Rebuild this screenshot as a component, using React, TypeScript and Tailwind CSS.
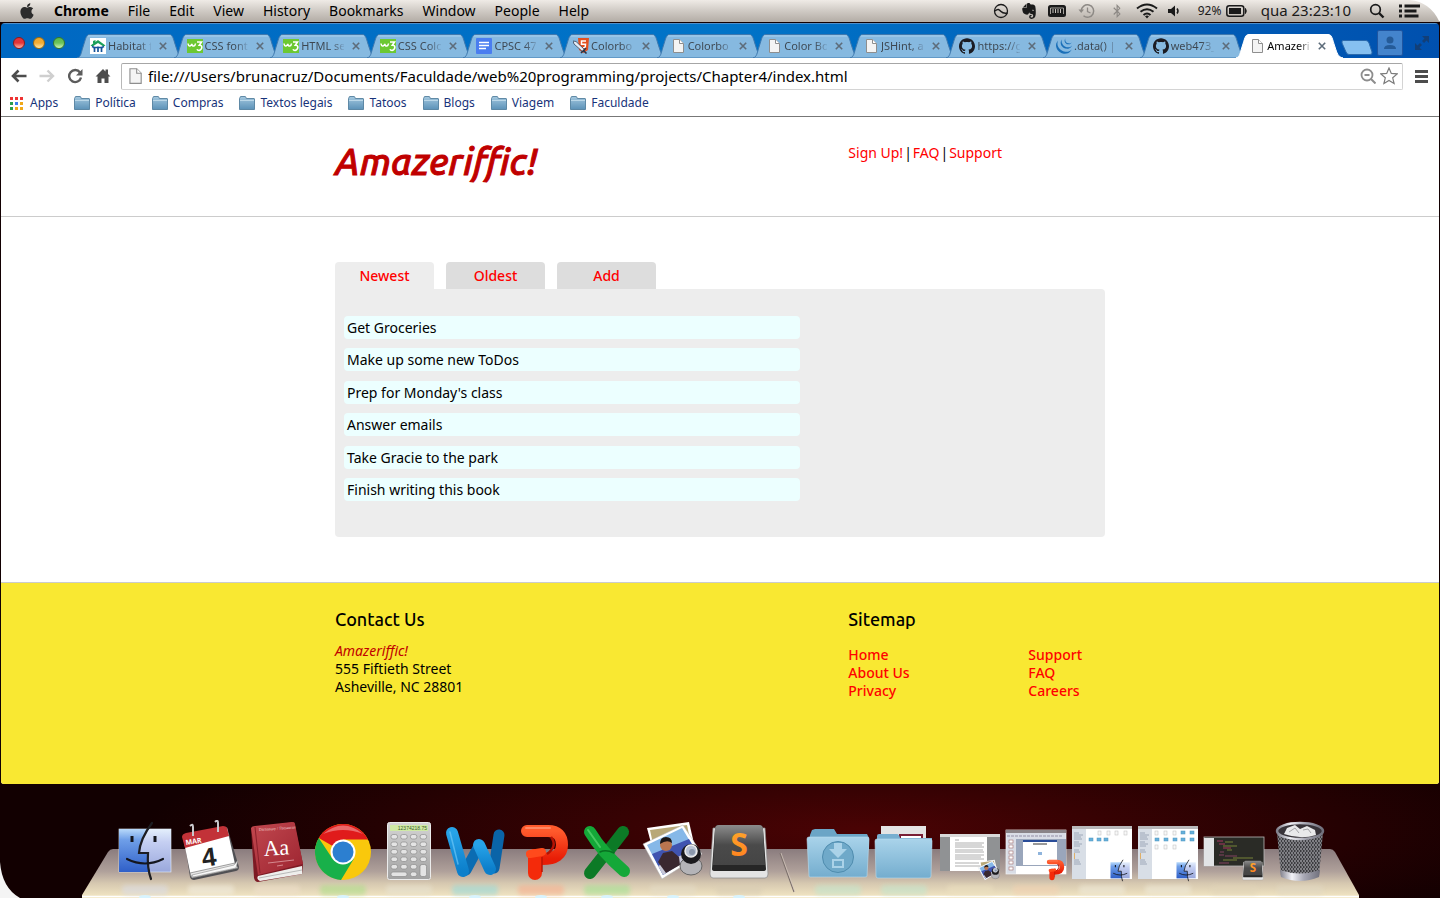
import React, { useState } from "react";
import {
  SiGithub,
  SiEvernote,
  SiJquery,
} from "react-icons/si";
import { FaApple, FaBluetoothB } from "react-icons/fa";

type IconName =
  | "habitat"
  | "w3"
  | "docs"
  | "sword"
  | "page"
  | "github"
  | "jquery";

const browserTabs: { title: string; icon: IconName; active?: boolean }[] = [
  { title: "Habitat f", icon: "habitat" },
  { title: "CSS font", icon: "w3" },
  { title: "HTML se", icon: "w3" },
  { title: "CSS Colo", icon: "w3" },
  { title: "CPSC 47", icon: "docs" },
  { title: "Colorbo", icon: "sword" },
  { title: "Colorbo", icon: "page" },
  { title: "Color Bo", icon: "page" },
  { title: "JSHint, a", icon: "page" },
  { title: "https://g", icon: "github" },
  { title: ".data() |", icon: "jquery" },
  { title: "web473_", icon: "github" },
  { title: "Amazeri", icon: "page", active: true },
];

const menus = ["File", "Edit", "View", "History", "Bookmarks", "Window", "People", "Help"];
const bookmarks = ["Política", "Compras", "Textos legais", "Tatoos", "Blogs", "Viagem", "Faculdade"];

const todos = [
  "Get Groceries",
  "Make up some new ToDos",
  "Prep for Monday's class",
  "Answer emails",
  "Take Gracie to the park",
  "Finish writing this book",
];

function SharedDefs() {
  return (
    <svg className="absolute h-0 w-0" aria-hidden="true">
      <defs>
        <linearGradient id="finderL" x1="0" y1="0" x2="0" y2="1">
          <stop offset="0" stopColor="#b9dafa" />
          <stop offset="0.25" stopColor="#6f9fe8" />
          <stop offset="1" stopColor="#2f5fc8" />
        </linearGradient>
        <linearGradient id="finderR" x1="0" y1="0" x2="0" y2="1">
          <stop offset="0" stopColor="#e4effc" />
          <stop offset="0.3" stopColor="#c5cff2" />
          <stop offset="1" stopColor="#9aa8dc" />
        </linearGradient>
        <linearGradient id="keyTop" x1="0" y1="0" x2="0" y2="1">
          <stop offset="0" stopColor="#8c8c8c" />
          <stop offset="0.5" stopColor="#4a4a4a" />
          <stop offset="1" stopColor="#454545" />
        </linearGradient>
        <linearGradient id="sLetter" x1="0" y1="0" x2="0" y2="1">
          <stop offset="0" stopColor="#ffb02e" />
          <stop offset="1" stopColor="#ff7a1c" />
        </linearGradient>
        <linearGradient id="folderFace" x1="0" y1="0" x2="0" y2="1">
          <stop offset="0" stopColor="#a9d3ea" />
          <stop offset="1" stopColor="#74adce" />
        </linearGradient>
        <linearGradient id="bookCover" x1="0" y1="0" x2="1" y2="1">
          <stop offset="0" stopColor="#c2484f" />
          <stop offset="1" stopColor="#9c2430" />
        </linearGradient>
        <linearGradient id="wBlue" x1="0" y1="0" x2="0" y2="1">
          <stop offset="0" stopColor="#27a3e8" />
          <stop offset="1" stopColor="#0c7fcb" />
        </linearGradient>
        <linearGradient id="pRed" x1="0" y1="0" x2="0" y2="1">
          <stop offset="0" stopColor="#ff5a2c" />
          <stop offset="1" stopColor="#e81d06" />
        </linearGradient>
        <linearGradient id="metal" x1="0" y1="0" x2="1" y2="0">
          <stop offset="0" stopColor="#80808c" />
          <stop offset="0.3" stopColor="#f2f2f8" />
          <stop offset="0.6" stopColor="#a8a8b4" />
          <stop offset="1" stopColor="#70707c" />
        </linearGradient>
        <linearGradient id="calcBody" x1="0" y1="0" x2="0" y2="1">
          <stop offset="0" stopColor="#d4d4d4" />
          <stop offset="1" stopColor="#a2a2a2" />
        </linearGradient>
        <linearGradient id="smallFolder" x1="0" y1="0" x2="0" y2="1">
          <stop offset="0" stopColor="#a4c8df" />
          <stop offset="1" stopColor="#5c92b8" />
        </linearGradient>
        <pattern id="mesh" width="3" height="4" patternUnits="userSpaceOnUse">
          <rect width="3" height="4" fill="#3c3c40" />
          <path d="M0 1H2M1.500 3H3" stroke="#c4c4ca" strokeWidth="1" />
        </pattern>
      </defs>
    </svg>
  );
}

/* ---------- small icons ---------- */

function PageIcon({ className }: { className?: string }) {
  return (
    <svg viewBox="0 0 16 16" className={className} aria-hidden="true">
      <path d="M3.500 1.500h6l4 4v9h-10z" fill="#f4f4f4" stroke="#8e8e8e" />
      <path d="M9.500 1.500v4h4" fill="#fff" stroke="#8e8e8e" />
    </svg>
  );
}

function Favicon({ name }: { name: IconName }) {
  const cls = "h-4 w-4 shrink-0";
  if (name === "github") return <SiGithub className={cls + " text-[#1b1b22]"} aria-hidden="true" />;
  if (name === "jquery") return <SiJquery className={cls + " text-[#1a6fb8]"} aria-hidden="true" />;
  if (name === "page") return <PageIcon className={cls} />;
  if (name === "w3")
    return (
      <svg viewBox="0 0 16 16" className={cls} aria-hidden="true">
        <rect y="1" width="16" height="14" fill="#6cc832" />
        <path d="M1 5.500q.5 3 2 2.500T4.800 6q.5 2.500 2 2T8.500 5.500" fill="none" stroke="#fff" strokeWidth="1.500" />
        <path d="M10 4h4.500l-2.200 3.200q2.700 0 2.500 2.300T12 12.500q-1.500 0-2-1.200" fill="none" stroke="#fff" strokeWidth="1.600" />
      </svg>
    );
  if (name === "docs")
    return (
      <svg viewBox="0 0 16 16" className={cls} aria-hidden="true">
        <rect width="16" height="16" rx="1" fill="#4a7df0" />
        <path d="M3 4.500h10M3 7.500h10M3 10.500h7" stroke="#fff" strokeWidth="1.400" />
      </svg>
    );
  if (name === "sword")
    return (
      <svg viewBox="0 0 16 16" className={cls} aria-hidden="true">
        <path d="M5 0h11l-1 12-4.500 3L6 12z" fill="#e3501f" />
        <path d="M13 3H8.500v3.200H12.500l-.3 3-2 .8" fill="none" stroke="#fff" strokeWidth="1.500" />
        <path d="M0 3l3 .5L12 12l-2 2L1 6z" fill="#e6edf6" stroke="#39465c" strokeWidth=".8" />
        <path d="M8 15l5-5M11 13l2.500 2.500" stroke="#2b3345" strokeWidth="1.600" />
      </svg>
    );
  return (
    <svg viewBox="0 0 16 16" className={cls} aria-hidden="true">
      <rect width="16" height="16" fill="#fff" />
      <path d="M.5 7.500L8 2l7.500 5.500-2 1L8 5 2.500 8.500z" fill="#1ca05a" />
      <path d="M3 3l2.500-1v2.500L3 6z" fill="#1ca05a" />
      <path d="M4.500 14V9.500L2 8.500M8 14V8.500M11.500 14V9.500l2.500-1M3 9.500h10" fill="none" stroke="#14539a" strokeWidth="1.700" />
    </svg>
  );
}

function FolderGlyph() {
  return (
    <svg viewBox="0 0 16 14" className="h-[14px] w-4 shrink-0" aria-hidden="true">
      <path d="M1 1.500q0-1 1-1h4q.8 0 1 1l.3 1H15q.5 0 .5.500V13.500H.5V2.500z" fill="url(#smallFolder)" stroke="#54809e" strokeWidth=".9" />
      <path d="M1 4.500h14" stroke="#c6dfee" strokeWidth=".8" />
    </svg>
  );
}

/* ---------- menu bar ---------- */

function StatusIcons() {
  return (
    <div className="flex items-center text-[#1a1a1a]">
      <svg viewBox="0 0 16 16" className="h-4 w-4" aria-hidden="true">
        <circle cx="8" cy="8" r="6.500" fill="none" stroke="currentColor" strokeWidth="1.300" />
        <path d="M2 8c3-2.500 4-1.500 6 .5s4 2 6.500 1.500" fill="none" stroke="currentColor" strokeWidth="1.600" />
      </svg>
      <SiEvernote className="ml-3 h-4 w-4" aria-hidden="true" />
      <svg viewBox="0 0 18 14" className="ml-[11px] h-[14px] w-[18px]" aria-hidden="true">
        <rect y="1" width="18" height="12" rx="2.500" fill="currentColor" />
        <path d="M5 5v4M7.500 5v4M10 5v4M12.500 5v4" stroke="#c8c4be" strokeWidth="1" />
        <path d="M2.500 10V4h13v6" fill="none" stroke="#c8c4be" strokeWidth=".8" />
      </svg>
      <svg viewBox="0 0 18 16" className="ml-3 h-4 w-[18px] text-[#8d8985]" aria-hidden="true">
        <path d="M3.300 8A6.200 6.200 0 1 1 5.500 12.800" fill="none" stroke="currentColor" strokeWidth="1.500" />
        <path d="M0.500 6.500h5.500L3.200 10z" fill="currentColor" />
        <path d="M9.500 4.500V8.500l3 1.500" fill="none" stroke="currentColor" strokeWidth="1.300" />
      </svg>
      <FaBluetoothB className="ml-[14px] h-[14px] w-[14px] text-[#8d8985]" aria-hidden="true" />
      <svg viewBox="0 0 22 16" className="ml-3 h-4 w-[22px]" aria-hidden="true">
        <path d="M1 5.500q10-8 20 0M4.500 8.800q6.500-5.200 13 0M7.500 12q3.500-3 7 0" fill="none" stroke="currentColor" strokeWidth="2" />
        <path d="M9 13.200q2-1.600 4 0L11 15.500z" fill="currentColor" />
      </svg>
      <svg viewBox="0 0 14 14" className="ml-[10px] h-[14px] w-[14px]" aria-hidden="true">
        <path d="M0 5h3l4-3.500v11L3 9H0z" fill="currentColor" />
        <path d="M9 4.500q2 2.500 0 5" fill="none" stroke="currentColor" strokeWidth="1.500" />
      </svg>
      <span className="ml-4 w-6 text-xs whitespace-nowrap">92%</span>
      <svg viewBox="0 0 21 12" className="ml-1 h-3 w-[21px]" aria-hidden="true">
        <rect x=".8" y=".8" width="17" height="10.400" rx="2.500" fill="none" stroke="currentColor" strokeWidth="1.500" />
        <rect x="3" y="3" width="12" height="6" fill="currentColor" />
        <path d="M19.500 3.500q1.500 2.500 0 5z" fill="currentColor" stroke="currentColor" />
      </svg>
      <time className="ml-[14px] text-[15px] whitespace-nowrap">qua 23:23:10</time>
      <button type="button" aria-label="Spotlight" className="ml-[18px]">
        <svg viewBox="0 0 16 16" className="h-4 w-4" aria-hidden="true">
          <circle cx="6.500" cy="6.500" r="4.800" fill="none" stroke="currentColor" strokeWidth="1.700" />
          <path d="M10 10l4.500 4.500" stroke="currentColor" strokeWidth="2.400" />
        </svg>
      </button>
      <button type="button" aria-label="Notification list" className="ml-[14px]">
        <svg viewBox="0 0 21 14" className="h-[14px] w-[21px]" aria-hidden="true">
          <path d="M0 2h3M0 7h3M0 12h3" stroke="currentColor" strokeWidth="3" />
          <path d="M5.500 2h15.500M5.500 7h12M5.500 12h14" stroke="currentColor" strokeWidth="3" />
        </svg>
      </button>
    </div>
  );
}

function MenuBar() {
  return (
    <header className="relative flex h-[22px] items-center justify-between bg-linear-to-b from-[#efebe6] via-[#cfcac4] to-[#b3aca5] pr-[20px] pl-[19px] text-sm text-black">
      <nav className="flex items-center gap-[19px]">
        <FaApple className="h-[18px] w-4 text-[#2c2c2c]" aria-hidden="true" />
        <span className="font-bold">Chrome</span>
        {menus.map((m) => (
          <button type="button" key={m}>
            {m}
          </button>
        ))}
      </nav>
      <StatusIcons />
      <svg viewBox="0 0 30 22" className="absolute top-0 right-0 h-[22px] w-[30px]" aria-hidden="true">
        <path d="M0 0Q20 2 29 21L30 21V0z" fill="#fff" />
      </svg>
    </header>
  );
}

/* ---------- browser chrome ---------- */

function TabShape({ active }: { active?: boolean }) {
  return (
    <svg viewBox="0 0 108 24" preserveAspectRatio="none" className="absolute inset-y-0 left-0 h-6 w-[108px]" aria-hidden="true">
      <path
        d="M0 24C4 23 4 19 6 13 9 4 9 .5 13 .5H92C96 .5 96 4 99 13 101 19 102 23 107 24z"
        fill={active ? "#ffffff" : "#86b9e0"}
        stroke={active ? "#ffffff" : "#3f78ae"}
        strokeWidth="1"
      />
      {!active && <path d="M11 2H94" stroke="#a9d0ee" strokeWidth="1" />}
    </svg>
  );
}

function TabStrip() {
  return (
    <div className="flex h-[35px] items-end border-t border-[#4f8fca] bg-linear-to-r from-[#0068c2] via-[#0074c8] to-[#0050ae]">
      <div className="flex h-full w-[76px] shrink-0 items-center gap-2 pt-1 pl-3">
        <button type="button" aria-label="Close window" className="h-3 w-3 rounded-full border border-[#8c1a1a] bg-linear-to-b from-[#e2343a] via-[#e2343a] to-[#ffb0a8]" />
        <button type="button" aria-label="Minimize window" className="h-3 w-3 rounded-full border border-[#a06c10] bg-linear-to-b from-[#f0a830] via-[#f3ad34] to-[#ffeaa0]" />
        <button type="button" aria-label="Zoom window" className="h-3 w-3 rounded-full border border-[#38782c] bg-linear-to-b from-[#5cb84c] via-[#6cc45c] to-[#d0f8b8]" />
      </div>
      <div className="flex min-w-0 flex-1">
        {browserTabs.map((tab, i) => (
          <div key={i} className="relative h-6 min-w-0 flex-1">
            <TabShape active={tab.active} />
            <div className="relative flex h-6 w-[95px] items-center pl-[13px]">
              <Favicon name={tab.icon} />
              <span
                className={
                  tab.active
                    ? "ml-[2px] w-[43px] bg-linear-to-r from-black from-70% to-[#dddddd] bg-clip-text text-[11px] whitespace-nowrap text-transparent"
                    : "ml-[2px] w-[43px] bg-linear-to-r from-[#3c4650] from-70% to-[#7ba9cf] bg-clip-text text-[11px] whitespace-nowrap text-transparent"
                }
              >
                {tab.title}
              </span>
              <button type="button" aria-label={"Close " + tab.title} className="ml-2 shrink-0">
                <svg viewBox="0 0 8 8" className="h-2 w-2" aria-hidden="true">
                  <path d="M.8.8l6.400 6.400M7.200.8L.8 7.200" stroke="#5d6c7a" strokeWidth="1.600" />
                </svg>
              </button>
            </div>
          </div>
        ))}
      </div>
      <div className="flex h-full w-[106px] shrink-0 items-center pt-1 pl-2">
        <button type="button" aria-label="New tab" className="mt-2">
          <svg viewBox="0 0 32 15" className="h-[15px] w-8" aria-hidden="true">
            <path d="M2 .5H25Q27 .5 28 3L31 12Q31.500 14.500 29 14.500H8Q6 14.500 5 12L1 3Q.5.500 2 .5z" fill="#86c0f0" stroke="#2c6aac" />
          </svg>
        </button>
        <button type="button" aria-label="Profile" className="ml-1 flex h-[26px] w-[26px] items-center justify-center rounded-xs border border-[#1f55a0] bg-[#4484cc]">
          <svg viewBox="0 0 14 14" className="h-[14px] w-[14px]" aria-hidden="true">
            <circle cx="7" cy="4" r="3.500" fill="#255b98" />
            <path d="M1 13q0-4 6-4t6 4z" fill="#255b98" />
          </svg>
        </button>
        <button type="button" aria-label="Full screen" className="ml-3">
          <svg viewBox="0 0 14 14" className="h-[14px] w-[14px]" aria-hidden="true">
            <path d="M7 0h7v7l-2.500-2.500L9 7 7 5l2.500-2.500zM7 14H0V7l2.500 2.500L5 7l2 2-2.500 2.500z" fill="#123f78" />
          </svg>
        </button>
      </div>
    </div>
  );
}

function Toolbar() {
  return (
    <div className="flex h-8 items-center bg-white pt-1 pr-[11px] pl-[10px] text-[#4d4d4d]">
      <button type="button" aria-label="Back">
        <svg viewBox="0 0 16 14" className="h-[14px] w-4" aria-hidden="true">
          <path d="M7.500 1.500L2 7l5.500 5.500M2 7h13.500" fill="none" stroke="currentColor" strokeWidth="2.600" />
        </svg>
      </button>
      <button type="button" aria-label="Forward" className="ml-3 text-[#cfcfcf]">
        <svg viewBox="0 0 16 14" className="h-[14px] w-4" aria-hidden="true">
          <path d="M8.500 1.500L14 7l-5.500 5.500M14 7H.5" fill="none" stroke="currentColor" strokeWidth="2.400" />
        </svg>
      </button>
      <button type="button" aria-label="Reload" className="ml-3 text-[#5c5c5c]">
        <svg viewBox="0 0 16 16" className="h-4 w-4" aria-hidden="true">
          <path d="M13 4.500A6 6 0 1 0 14 9.500" fill="none" stroke="currentColor" strokeWidth="2.400" />
          <path d="M15.500 1v6.500H9z" fill="currentColor" />
        </svg>
      </button>
      <button type="button" aria-label="Home" className="ml-3">
        <svg viewBox="0 0 16 16" className="h-4 w-4" aria-hidden="true">
          <path d="M8 1l2.500 2.500V1.500h2.500V6l2.500 2.500h-2V15H9.500v-4.500h-3V15H2.500V8.500h-2z" fill="currentColor" />
        </svg>
      </button>
      <div className="ml-[10px] flex h-[27px] min-w-0 flex-1 items-center rounded-xs border border-[#d4d4d4] border-t-[#a6a6a6] border-l-[#b8b8b8] bg-white pr-1 pl-1">
        <PageIcon className="h-[18px] w-[18px] shrink-0" />
        <input
          aria-label="Address"
          className="ml-1 min-w-0 flex-1 bg-transparent text-[15px] text-black outline-none"
          defaultValue="file:///Users/brunacruz/Documents/Faculdade/web%20programming/projects/Chapter4/index.html"
        />
        <button type="button" aria-label="Zoom out" className="text-[#8d8d8d]">
          <svg viewBox="0 0 16 16" className="h-4 w-4" aria-hidden="true">
            <circle cx="7" cy="7" r="5.500" fill="none" stroke="currentColor" strokeWidth="1.800" />
            <path d="M4.500 7h5M11 11l4.500 4.500" stroke="currentColor" strokeWidth="2" />
          </svg>
        </button>
        <button type="button" aria-label="Bookmark this page" className="ml-1 text-[#7c7c7c]">
          <svg viewBox="0 0 18 18" className="h-[18px] w-[18px]" aria-hidden="true">
            <path d="M9 1l2.300 5.400 5.900.5-4.500 3.900 1.400 5.800L9 13.500l-5.100 3.100 1.400-5.800L.8 6.900l5.900-.5z" fill="#fff" stroke="currentColor" strokeWidth="1.200" />
          </svg>
        </button>
      </div>
      <button type="button" aria-label="Chrome menu" className="ml-3">
        <svg viewBox="0 0 13 13" className="h-[13px] w-[13px]" aria-hidden="true">
          <path d="M0 1.500h13M0 6.500h13M0 11.500h13" stroke="currentColor" strokeWidth="2.800" />
        </svg>
      </button>
    </div>
  );
}

const appColors = ["#e33", "#e33", "#e33", "#2a9d4e", "#3b7ded", "#f0a818", "#2a9d4e", "#f0a818", "#f0a818"];

function BookmarksBar() {
  return (
    <div className="flex h-[27px] items-center border-b border-[#777777] bg-white pl-[9px] text-xs text-[#17337a]">
      <button type="button" className="flex items-center gap-[7px]">
        <svg viewBox="0 0 13 13" className="h-[13px] w-[13px]" aria-hidden="true">
          {appColors.map((c, i) => (
            <rect key={i} x={(i % 3) * 5} y={Math.floor(i / 3) * 5} width="3" height="3" fill={c} />
          ))}
        </svg>
        Apps
      </button>
      <div className="ml-4 flex gap-4">
        {bookmarks.map((b) => (
          <button type="button" key={b} className="flex items-center gap-[5px] whitespace-nowrap">
            <FolderGlyph />
            {b}
          </button>
        ))}
      </div>
    </div>
  );
}

/* ---------- page ---------- */

function SitePage() {
  const [tab, setTab] = useState("Newest");
  const rows = tab === "Oldest" ? [...todos].reverse() : todos;
  return (
    <div className="flex flex-1 flex-col bg-white font-['Droid_Sans','Noto_Sans',sans-serif] text-sm text-black">
      <div className="h-[100px] border-b border-[#cccccc]">
        <div className="mx-auto grid w-full max-w-[770px] grid-cols-3 pt-[18px]">
          <h1 className="col-span-2 font-['Ubuntu','Noto_Sans',sans-serif] text-[37px] leading-[54px] font-medium text-[#c00000] italic [-webkit-text-stroke:1px_#c00000]">
            Amazeriffic!
          </h1>
          <nav className="flex gap-px pt-2 leading-5">
            <a href="#signup" className="text-[#ff0000]">Sign Up!</a>
            <span>|</span>
            <a href="#faq" className="text-[#ff0000]">FAQ</a>
            <span>|</span>
            <a href="#support" className="text-[#ff0000]">Support</a>
          </nav>
        </div>
      </div>

      <main className="mx-auto w-full max-w-[770px] pt-[45px] pb-[45px]">
        <div role="tablist" className="flex gap-3">
          {["Newest", "Oldest", "Add"].map((t) => (
            <button
              type="button"
              role="tab"
              aria-selected={t === tab}
              key={t}
              onClick={() => setTab(t)}
              className={
                t === tab
                  ? "h-[27px] w-[99px] rounded-t bg-[#ededed] font-medium text-[#ff0000]"
                  : "h-[27px] w-[99px] rounded-t bg-[#dddddd] font-medium text-[#ff0000]"
              }
            >
              {t}
            </button>
          ))}
        </div>
        <div role="tabpanel" className="rounded-r rounded-bl bg-[#ededed] px-[9px] pt-[27px] pb-9">
          <ul className="flex min-h-[185px] max-w-[456px] flex-col justify-between">
            {rows.map((t) => (
              <li key={t} className="h-[23px] rounded bg-[#ecffff] pl-[3px] leading-[23px]">
                {t}
              </li>
            ))}
          </ul>
        </div>
      </main>

      <footer className="flex-1 border-t border-[#cccccc] bg-[#f9e832]">
        <div className="mx-auto grid w-full max-w-[770px] grid-cols-3 pt-6">
          <div className="col-span-2">
            <h2 className="font-['Ubuntu','Noto_Sans',sans-serif] text-lg leading-6 font-medium">Contact Us</h2>
            <address className="mt-[11px] leading-[18px] not-italic">
              <span className="text-[#c00000] italic">Amazeriffic!</span>
              <br />
              555 Fiftieth Street
              <br />
              Asheville, NC 28801
            </address>
          </div>
          <div>
            <h2 className="font-['Ubuntu','Noto_Sans',sans-serif] text-lg leading-6 font-medium">Sitemap</h2>
            <div className="mt-[15px] flex leading-[18px] font-medium text-[#ff0000]">
              <ul className="w-[180px]">
                <li><a href="#home">Home</a></li>
                <li><a href="#about">About Us</a></li>
                <li><a href="#privacy">Privacy</a></li>
              </ul>
              <ul>
                <li><a href="#support">Support</a></li>
                <li><a href="#faq">FAQ</a></li>
                <li><a href="#careers">Careers</a></li>
              </ul>
            </div>
          </div>
        </div>
      </footer>
    </div>
  );
}

/* ---------- dock artwork ---------- */

function FinderArt() {
  return (
    <g>
      <rect x="7" y="9" width="52" height="43" fill="url(#finderR)" stroke="#e8f0fc" strokeWidth=".6" />
      <path d="M7 9H37Q28 22 27 33H36Q35 42 38 52H7z" fill="url(#finderL)" />
      <path d="M40 3Q28 19 27 33H36Q35 48 39 59" fill="none" stroke="#1d1d22" strokeWidth="2.200" strokeLinecap="round" />
      <path d="M20 16v6M43 16v6" stroke="#14161e" strokeWidth="3" />
      <path d="M15 39Q33 48 51 39" fill="none" stroke="#14161e" strokeWidth="2.200" strokeLinecap="round" />
    </g>
  );
}

function CalendarArt() {
  return (
    <g>
      <path d="M6 18L49 7l12 40q0 3-3 4L16 60q-3 0-4-3z" fill="#505054" />
      <path d="M5 17L49 8l8 36L13 57z" fill="#fff" />
      <path d="M57 43l3 5-46 10-2-5z" fill="#e8e8e8" stroke="#777" strokeWidth=".7" />
      <path d="M14 55l42-10 4-5-2 8-43 9z" fill="#f8f8f8" stroke="#8a8a8a" strokeWidth=".6" />
      <path d="M4 17Q4 14 8 13L45 6q3 0 4 2l2 8L7 28z" fill="#c23238" />
      <path d="M12 6q3-3 3 1v9M37 2q3-3 3 1v9" fill="none" stroke="#c8c8cc" strokeWidth="2" />
      <text x="8" y="25" transform="rotate(-9 8 25)" fontSize="7" fontWeight="700" fill="#fff" fontFamily="Open Sans, sans-serif">MAR</text>
      <text x="25" y="47" transform="rotate(-8 25 47)" fontSize="26" fontWeight="700" fill="#222" fontFamily="Liberation Sans, sans-serif">4</text>
    </g>
  );
}

function DictionaryArt() {
  return (
    <g>
      <path d="M7 8L50 2l9 42-1 10L14 62q-3 0-4-4z" fill="#7d1a24" />
      <path d="M14 56L58 46v8L16 61q-4-2-2-5z" fill="#eeeeec" />
      <path d="M15 58l43-8" stroke="#aaa" strokeWidth=".8" />
      <path d="M7 8Q8 6 11 6L48 2q3 0 3 2l8 40-45 11z" fill="url(#bookCover)" />
      <path d="M11 7l5 46" stroke="#8a202b" strokeWidth="1" />
      <text x="15" y="11" transform="rotate(-4 15 11)" fontSize="4" fill="#f3d5d5" fontFamily="Liberation Serif, serif">Dictionary / Thesaurus</text>
      <text x="20" y="36" transform="rotate(-4 20 36)" fontSize="22" fill="#fff" fontFamily="Liberation Serif, serif">Aa</text>
      <path d="M24 43l26-3M33 46l6-1" stroke="#e0a0a4" strokeWidth=".8" />
    </g>
  );
}

function ChromeArt() {
  return (
    <g>
      <circle cx="33" cy="32" r="28" fill="#f9c80c" />
      <path d="M33 32L8.750 18A28 28 0 0 1 58 19.500H33z" fill="#e01b1b" />
      <path d="M8.750 18A28 28 0 0 0 31 60L44 38.500 33 32 22 38z" fill="#18b04a" />
      <circle cx="33" cy="32" r="12.500" fill="#fff" />
      <circle cx="33" cy="32" r="10.500" fill="#2c7fd0" />
      <path d="M13 14Q33 -3 53 14 33 6 13 14z" fill="#fff" opacity=".35" />
    </g>
  );
}

const calcRows = [0, 1, 2, 3, 4];

function CalculatorArt() {
  return (
    <g>
      <rect x="11.500" y="2.500" width="43" height="57" rx="2" fill="url(#calcBody)" stroke="#ececec" />
      <rect x="14" y="5" width="38" height="6" fill="#cfeaa6" />
      <text x="51" y="10" textAnchor="end" fontSize="5" fill="#3d5a2a" fontFamily="Liberation Sans, sans-serif">12374218.75</text>
      {calcRows.map((r) =>
        [0, 1, 2, 3].map((c) => (
          <rect key={r + "-" + c} x={15 + c * 9.700} y={14.500 + r * 7.500} width="6.500" height="4.500" rx="2" fill="#e4e4e4" stroke="#8c8c8c" strokeWidth=".7" />
        ))
      )}
      <rect x="15" y="52" width="16" height="4.500" rx="2" fill="#e4e4e4" stroke="#8c8c8c" strokeWidth=".7" />
      <rect x="34.400" y="52" width="6.500" height="4.500" rx="2" fill="#e4e4e4" stroke="#8c8c8c" strokeWidth=".7" />
      <rect x="44" y="44.500" width="6.500" height="12" rx="2" fill="#e4e4e4" stroke="#8c8c8c" strokeWidth=".7" />
    </g>
  );
}

function WordArt() {
  return (
    <g fill="none" strokeLinecap="round" strokeLinejoin="round">
      <path d="M57 15L52 48" stroke="#0a64a8" strokeWidth="11" />
      <path d="M24 50L37 26" stroke="#0b6cb2" strokeWidth="11" />
      <path d="M10 13L21 51" stroke="url(#wBlue)" strokeWidth="12" />
      <path d="M37 25L48 49" stroke="url(#wBlue)" strokeWidth="12" />
      <path d="M8 12l8 32" stroke="#6cc6f6" strokeWidth="1.500" opacity=".7" />
    </g>
  );
}

function PowerPointArt() {
  return (
    <g fill="none" strokeLinejoin="round">
      <path d="M19 11H40Q54 11 54 25T34 39" stroke="url(#pRed)" strokeWidth="12" strokeLinecap="round" />
      <path d="M43 17Q50 26 39 34" stroke="#b51203" strokeWidth="2.500" />
      <path d="M27 36V53" stroke="#f42a0a" strokeWidth="14" strokeLinecap="round" />
      <path d="M22 34L34 32" stroke="#ff4a1c" strokeWidth="8" strokeLinecap="round" />
      <path d="M34 37v15" stroke="#b81404" strokeWidth="1.500" />
      <path d="M18 8H42" stroke="#ff9a7a" strokeWidth="2" opacity=".7" strokeLinecap="round" />
    </g>
  );
}

function ExcelArt() {
  return (
    <g fill="none" strokeLinecap="round">
      <path d="M49 12L32 34" stroke="#0c7a26" strokeWidth="12" />
      <path d="M16 53L31 34" stroke="#0c7a26" strokeWidth="12" />
      <path d="M16 12Q28 32 50 51" stroke="#14a838" strokeWidth="12" />
      <path d="M14 10l12 17" stroke="#5bd872" strokeWidth="2" opacity=".7" />
      <path d="M26 32q6-3 14 1" stroke="#087020" strokeWidth="1.500" />
    </g>
  );
}

function PreviewArt() {
  return (
    <g>
      <path d="M7 8L49 2l7 30-40 10z" fill="#fff" />
      <path d="M10 10L47 5l5 24-36 9z" fill="#b8a878" />
      <path d="M3 24L43 5 62 34 22 59z" fill="#fff" stroke="#b0b0b0" strokeWidth=".5" />
      <path d="M7 25L42 8l15 25-34 22z" fill="#86b8e8" />
      <path d="M12 34L49 19l8 14-34 22z" fill="#4054b0" />
      <path d="M18 46L55 29l2 4-34 22z" fill="#c8c8d8" />
      <path d="M18 42l5-9 9-2 7 6 1 8-14 8z" fill="#3a2830" />
      <circle cx="26" cy="25" r="6" fill="#b9764f" />
      <path d="M20 24q0-7 6-7t6 6q-5-4-12 1z" fill="#1c1614" />
      <ellipse cx="51" cy="46" rx="11" ry="9" fill="#b4b4b8" stroke="#666" />
      <circle cx="51" cy="34" r="10" fill="#1a1a1e" />
      <circle cx="51" cy="31" r="6" fill="#b9c3d4" stroke="#eee" strokeWidth="1.500" />
      <circle cx="52" cy="32" r="3" fill="#8a97ac" />
    </g>
  );
}

function SublimeArt() {
  return (
    <g>
      <path d="M7 8h52l3 46q0 4-3 4H7q-3 0-3-4z" fill="#e4e4e4" stroke="#8a8a8a" strokeWidth=".7" />
      <path d="M9 9Q9 5 13 5H53q4 0 4 4l3 40q0 2-3 2H9q-3 0-3-2z" fill="#262626" />
      <path d="M9 9Q9 5 13 5H53q4 0 4 4l2 36H7z" fill="url(#keyTop)" />
      <text x="33" y="36" textAnchor="middle" fontSize="32" fontWeight="700" fill="url(#sLetter)" fontFamily="Open Sans, sans-serif">S</text>
    </g>
  );
}

function DownloadsArt() {
  return (
    <g>
      <path d="M5 15L7 10 10 9Q10 9 12 9H29l3 5H62l2 4V30H3z" fill="#6ba5c6" />
      <path d="M2 19Q2 17 4 17H62q2 0 2 2L62 56q0 1-2 1H5q-1 0-1-1z" fill="url(#folderFace)" stroke="#b8dcee" strokeWidth=".6" />
      <circle cx="33" cy="37" r="15.500" fill="#6fa9c9" stroke="#4f8cae" strokeWidth="1" />
      <path d="M29 23h8v6h5L33 38l-9-9h5z" fill="#aad2e8" />
      <rect x="28" y="40" width="10" height="7" fill="none" stroke="#aad2e8" strokeWidth="2" />
    </g>
  );
}

function DocumentsArt() {
  return (
    <g>
      <rect x="10" y="6" width="45" height="20" fill="#e4e4e4" />
      <path d="M29 15h22v6H29z" fill="#fff" stroke="#7a2036" strokeWidth="2" />
      <path d="M6 20V16Q6 14 8 14H26q2 0 3 4H61v10H6z" fill="#78afd0" />
      <path d="M4 21Q4 19 6 19H59q2 0 2 2L60 56q0 2-2 2H7q-2 0-2-2z" fill="url(#folderFace)" stroke="#b8dcee" strokeWidth=".6" />
    </g>
  );
}

function MiniDocument() {
  return (
    <g>
      <rect x="3" y="14" width="60" height="37" fill="#909294" />
      <rect x="3" y="14" width="60" height="3" fill="#dadada" />
      <rect x="13" y="17" width="37" height="34" fill="#fff" />
      <path d="M18 20h4M18 23h29M18 25h27M18 27h29M18 30h28M18 32h29M18 35h29M18 37h26M18 39h29M18 43h24M18 46h27" stroke="#999" strokeWidth=".8" />
      <g transform="translate(40 39) scale(.36)"><PreviewArt /></g>
    </g>
  );
}

function MiniSlides() {
  return (
    <g>
      <rect x="3" y="10" width="60" height="44" fill="#d9dde6" stroke="#f2f2f2" strokeWidth=".7" />
      <rect x="3" y="10" width="60" height="3" fill="#8a8488" />
      <path d="M4 16h56" stroke="#b6b6c6" strokeWidth="2" strokeDasharray="3 1" />
      <rect x="13" y="19" width="50" height="27" fill="#9aa6bb" />
      <rect x="20" y="20" width="34" height="25" fill="#fff" />
      <rect x="20" y="20" width="34" height="2" fill="#284c98" />
      <path d="M30 24h14" stroke="#333" />
      <rect x="35" y="32" width="4" height="3" fill="#8fb4dc" />
      {[20, 25, 31, 36, 41, 47].map((y) => (
        <rect key={y} x="6" y={y} width="4" height="3" fill="#fff" stroke="#a27070" strokeWidth=".6" />
      ))}
      <rect x="13" y="46" width="50" height="8" fill="#fff" />
      <g transform="translate(39 38) scale(.37)"><PowerPointArt /></g>
    </g>
  );
}

function MiniFinder({ full }: { full?: boolean }) {
  const cells = full
    ? [[20, 2, 0], [29, 2, 0], [38, 2, 0], [46, 2, 1], [55, 2, 1], [20, 9, 1], [29, 9, 1], [38, 9, 1], [46, 9, 1], [55, 9, 1], [20, 16, 0], [29, 16, 0], [38, 16, 0]]
    : [[29, 2, 0], [38, 2, 0], [46, 2, 0], [55, 2, 0], [20, 9, 1], [28, 9, 1], [35, 9, 1]];
  return (
    <g>
      <rect x="3" y="6" width="60" height="53" fill="#fff" />
      <rect x="3" y="6" width="60" height="3" fill="#b9b9bb" />
      <rect x="3" y="9" width="14" height="50" fill="#d8dee6" />
      <path d="M5 13h5M5 15h9M5 17h7M5 19h8M5 22h5M5 24h8M5 26h6M5 30h5M5 32h6M5 40h5M5 42h6M5 44h7" stroke="#8f9aac" strokeWidth=".8" />
      <path d="M5 34h1M5 36h1M5 38h1" stroke="#e0a040" strokeWidth="1.500" />
      {cells.map(([x, y, folder], i) => (
        <rect key={i} x={x} y={y + 9} width={folder ? 4 : 3} height={folder ? 3 : 4} fill={folder ? "#67b0da" : "#f8f8f8"} stroke={folder ? "#4a94c0" : "#bbb"} strokeWidth=".5" />
      ))}
      <g transform="translate(39 39) scale(.37)"><FinderArt /></g>
    </g>
  );
}

function MiniCode() {
  return (
    <g>
      <rect x="3" y="17" width="60" height="29" fill="#2a2b26" stroke="#b8b8b8" strokeWidth=".8" />
      <rect x="3" y="18" width="10" height="28" fill="#e2e4e6" />
      <path d="M16 21h6M18 24h6M22 28h8" stroke="#c83a6c" strokeWidth=".8" />
      <path d="M24 22h8M22 26h14M26 30h5M22 40h14M32 38h20" stroke="#8a9a3c" strokeWidth=".8" />
      <path d="M19 32h4M18 35h5M24 36h12M18 43h10" stroke="#9a4a70" strokeWidth=".8" />
      <g transform="translate(40 39) scale(.36)"><SublimeArt /></g>
    </g>
  );
}

function TrashArt() {
  return (
    <g>
      <path d="M10 12H56L52 56Q33 64 14 56z" fill="url(#mesh)" />
      <path d="M13 50q20 7 40 0l-1 7q-19 8-38 0z" fill="url(#metal)" />
      <ellipse cx="33" cy="11" rx="23" ry="8" fill="#38343a" stroke="url(#metal)" strokeWidth="2.500" />
      <path d="M17 14l3-6 8-3 5 4 7-3 8 4 1 5q-15 5-32-1z" fill="#e9e9eb" />
      <path d="M22 12l6-4 4 5M36 10l5-1 3 4" fill="none" stroke="#a4a4a8" />
    </g>
  );
}

const dockApps: { name: string; art: React.ReactNode; running?: boolean; glow: string }[] = [
  { name: "Finder", art: <FinderArt />, running: true, glow: "#d8dcec" },
  { name: "Calendar", art: <CalendarArt />, glow: "#f4f0e4" },
  { name: "Dictionary", art: <DictionaryArt />, glow: "#f0e0cc" },
  { name: "Chrome", art: <ChromeArt />, running: true, glow: "#a4e080" },
  { name: "Calculator", art: <CalculatorArt />, glow: "#e8e4d4" },
  { name: "Word", art: <WordArt />, running: true, glow: "#8cdce0" },
  { name: "PowerPoint", art: <PowerPointArt />, running: true, glow: "#fca888" },
  { name: "Excel", art: <ExcelArt />, running: true, glow: "#98e48c" },
  { name: "Preview", art: <PreviewArt />, running: true, glow: "#e4dcc8" },
  { name: "Sublime Text", art: <SublimeArt />, running: true, glow: "#d8ccb4" },
];

const dockItems: { name: string; art: React.ReactNode; running?: boolean; glow: string }[] = [
  { name: "Downloads", art: <DownloadsArt />, glow: "#bce8d0" },
  { name: "Documents", art: <DocumentsArt />, glow: "#bce8d0" },
  { name: "Document window", art: <MiniDocument />, glow: "#ece0c0" },
  { name: "Slides window", art: <MiniSlides />, glow: "#f4d0b0" },
  { name: "Finder window", art: <MiniFinder />, glow: "#f0ecdc" },
  { name: "Finder window 2", art: <MiniFinder full />, glow: "#f0ecdc" },
  { name: "Code window", art: <MiniCode />, glow: "#e0d4b8" },
  { name: "Trash", art: <TrashArt />, glow: "#e0d8c4" },
];

function DockIcon({ item }: { item: (typeof dockApps)[number] }) {
  return (
    <button type="button" aria-label={item.name} className="w-[66px] shrink-0">
      <svg viewBox="0 0 66 78" className="h-[78px] w-[66px]" aria-hidden="true">
        <rect x="10" y="65" width="46" height="10" rx="4" fill={item.glow} opacity=".5" className="blur-[2px]" />
        {item.art}
        {item.running && <ellipse cx="33" cy="77" rx="6" ry="2" fill="#d8f4ff" />}
      </svg>
    </button>
  );
}

function Dock() {
  return (
    <div className="relative flex h-[114px] items-end justify-center">
      <svg viewBox="0 0 1277 49" preserveAspectRatio="none" className="absolute bottom-0 h-[49px] w-[1277px]" aria-hidden="true">
        <defs>
          <linearGradient id="shelf" x1="0" y1="0" x2="0" y2="1">
            <stop offset="0" stopColor="#8a7c7e" />
            <stop offset="0.45" stopColor="#afa09a" />
            <stop offset="0.7" stopColor="#d6c8b0" />
            <stop offset="1" stopColor="#f4e8c4" />
          </linearGradient>
        </defs>
        <path d="M31 0H1248Q1251 0 1253 3L1277 46V49H0V46L26 3Q28 0 31 0z" fill="url(#shelf)" />
        <path d="M0 47.500H1277" stroke="#fff" strokeWidth="1.500" />
      </svg>
      <nav aria-label="Dock" className="relative flex items-end pl-[5px]">
        {dockApps.map((d) => (
          <DockIcon key={d.name} item={d} />
        ))}
        <svg viewBox="0 0 33 78" className="h-[78px] w-[33px]" aria-hidden="true">
          <path d="M8 33L22 72" stroke="#7c706c" strokeWidth="1.200" />
          <path d="M9 33L23 72" stroke="#d8ccc0" strokeWidth=".7" />
        </svg>
        {dockItems.map((d) => (
          <DockIcon key={d.name} item={d} />
        ))}
      </nav>
      <svg viewBox="0 0 20 36" className="absolute bottom-0 left-0 h-9 w-5" aria-hidden="true">
        <path d="M0 0Q2 26 20 36H0z" fill="#f4f4f4" />
      </svg>
    </div>
  );
}

export default function App() {
  return (
    <div className="flex min-h-screen flex-col overflow-hidden bg-[#1a0202] bg-[radial-gradient(ellipse_50%_120px_at_60%_830px,#4a0304,#120001)] font-['Lucida_Grande','Noto_Sans',sans-serif]">
      <SharedDefs />
      <MenuBar />
      <div className="mx-px mt-px flex flex-1 flex-col overflow-hidden rounded-t-[4px] rounded-b-[3px]">
        <TabStrip />
        <Toolbar />
        <BookmarksBar />
        <SitePage />
      </div>
      <Dock />
    </div>
  );
}
